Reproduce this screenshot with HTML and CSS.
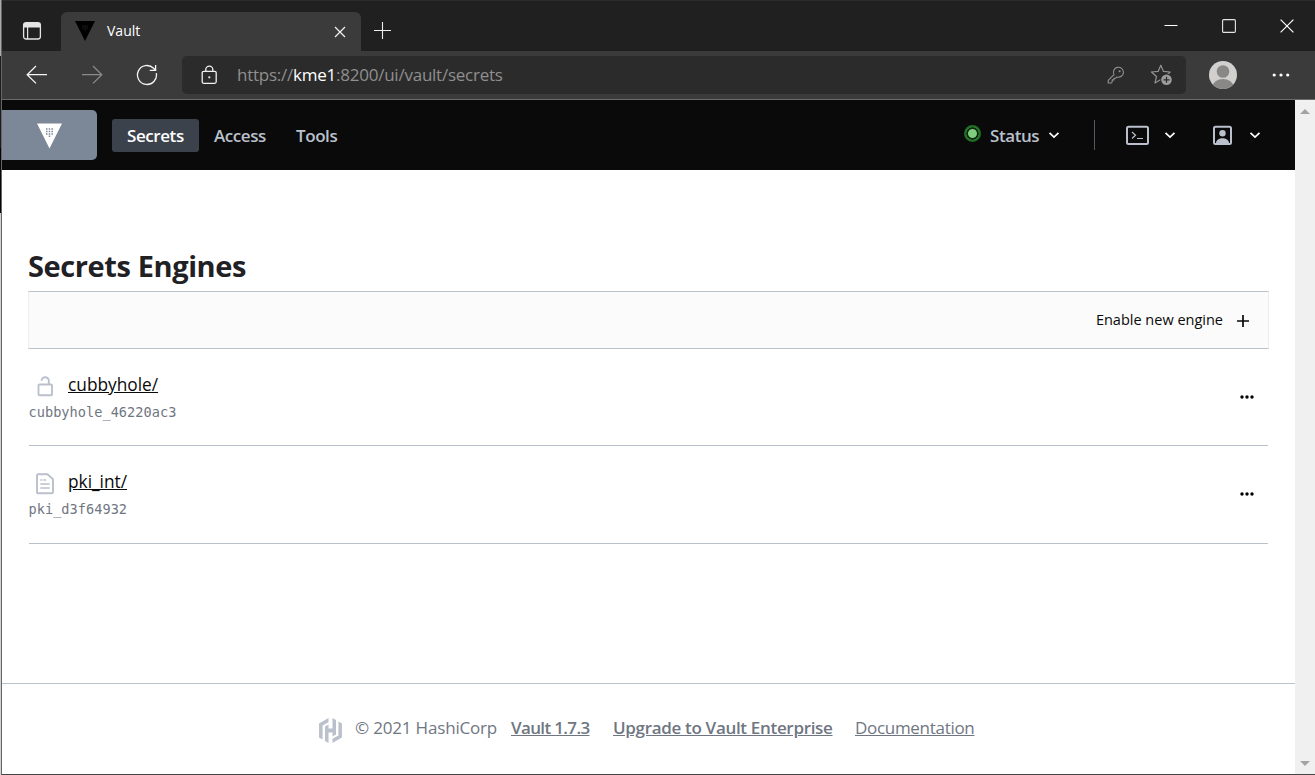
FILE: index.html
```html
<!DOCTYPE html>
<html lang="en">
<head>
  <meta charset="UTF-8" />
  <meta name="viewport" content="width=device-width, initial-scale=1.0" />
  <title>Vault</title>
  <link rel="stylesheet" href="styles.css">
</head>
<body>
  <div class="edge"></div>
  <div class="window">
    <div class="tabbar">
      <svg class="tab-menu" width="20" height="20" viewBox="0 0 20 20"><rect x="1.6" y="1.6" width="16.8" height="16.4" rx="2.5" fill="none" stroke="#e4e4e4" stroke-width="1.3"/><path d="M2 2h16v4.5H2z" fill="#e4e4e4"/><path d="M5.6 6v12" stroke="#e4e4e4" stroke-width="1.2"/></svg>
      <div class="tab">
        <svg class="favicon" width="20" height="20" viewBox="0 0 20 20"><path d="M0 0h20L10 20z" fill="#000"/><path d="M7.5 4.5h1.2v1.2H7.5zM9.5 4.5h1.2v1.2H9.5zM11.5 4.5h1.2v1.2h-1.2zM7.5 6.5h1.2v1.2H7.5zM9.5 6.5h1.2v1.2H9.5zM11.5 6.5h1.2v1.2h-1.2zM9.5 8.5h1.2v1.2H9.5z" fill="#222"/></svg>
        <span class="tab-title">Vault</span>
        <svg class="tab-close" width="12" height="12" viewBox="0 0 12 12"><path d="M1 1l10 10M11 1L1 11" stroke="#eee" stroke-width="1.3"/></svg>
      </div>
      <svg class="tab-new" width="18" height="18" viewBox="0 0 18 18"><path d="M8.5 0v17M0 8.5h17" stroke="#eee" stroke-width="1.1"/></svg>
      <div class="controls">
        <svg width="14" height="14" viewBox="0 0 14 14"><path d="M.5 6.5h13" stroke="#fff"/></svg>
        <svg width="14" height="14" viewBox="0 0 14 14"><rect x=".6" y=".6" width="12.8" height="12.8" rx="1.2" fill="none" stroke="#e8e4e0" stroke-width="1.1"/></svg>
        <svg width="14" height="14" viewBox="0 0 14 14"><path d="M.6.6l12.8 12.8M13.4.6L.6 13.4" stroke="#fff" stroke-width="1.2"/></svg>
      </div>
    </div>
    <div class="toolbar">
      <svg class="back" width="22" height="20" viewBox="0 0 22 20"><path d="M21 9.7H1.2M10 1L1.2 9.7 10 18.4" fill="none" stroke="#f4f4f4" stroke-width="1.3"/></svg>
      <svg class="forward" width="22" height="20" viewBox="0 0 22 20"><path d="M1 9.7h19.8M12 1l8.8 8.7-8.8 8.7" fill="none" stroke="#8a8a8a" stroke-width="1.3"/></svg>
      <svg class="reload" width="22" height="22" viewBox="0 0 22 22"><path d="M20.3 9.2A9.5 9.5 0 1 1 17.6 4.2L19 5.8M19.6 1v5.4h-5.8" fill="none" stroke="#f4f4f4" stroke-width="1.3"/></svg>
      <div class="address">
        <svg class="lock" width="16" height="20" viewBox="0 0 16 20"><rect x="1.2" y="6.3" width="14" height="12" rx="1.5" fill="none" stroke="#f0f0f0" stroke-width="1.3"/><path d="M4.8 6.3V4.6a3.5 3.5 0 0 1 7 0v1.7" fill="none" stroke="#f0f0f0" stroke-width="1.3"/><circle cx="8.3" cy="12.3" r="1.1" fill="#f0f0f0"/></svg>
        <span class="url">https://<b>kme1</b>:8200/ui/vault/secrets</span>
        <svg class="key" width="18" height="18" viewBox="0 0 18 18"><path d="M7 8.6A5 5 0 1 1 9.9 11L8.6 12.2H7v1.7H5.2v2L4.3 17H1.2v-2.7z" fill="none" stroke="#929292" stroke-width="1.1" stroke-linejoin="round"/><circle cx="12.6" cy="5.2" r="1" fill="#929292"/></svg>
        <svg class="star" width="23" height="22" viewBox="0 0 23 22"><path d="M10.8 1.2l2.7 6.2 6.7.6-5.1 4.5 1.5 6.4-5.8-3.4L5 18.9l1.5-6.4L1.4 8l6.7-.6z" fill="none" stroke="#929292" stroke-width="1.2" stroke-linejoin="round"/><circle cx="16.5" cy="15.8" r="6.2" fill="#2b2b2b"/><circle cx="16.5" cy="15.8" r="5.3" fill="#9c9c9c"/><path d="M16.5 12.8v6M13.5 15.8h6" stroke="#2b2b2b" stroke-width="1.2"/></svg>
      </div>
      <svg class="avatar" width="28" height="28" viewBox="0 0 28 28"><clipPath id="face"><circle cx="14" cy="14" r="14"/></clipPath><g clip-path="url(#face)"><path d="M0 0h28v28H0z" fill="#d2d0ce"/><circle cx="14" cy="10.5" r="6.3" fill="#8a8886"/><ellipse cx="14" cy="26" rx="10.5" ry="8" fill="#8a8886"/></g></svg>
      <svg class="more" width="18" height="4" viewBox="0 0 18 4"><g fill="#fff"><circle cx="2.2" cy="2" r="1.6"/><circle cx="9" cy="2" r="1.6"/><circle cx="15.7" cy="2" r="1.6"/></g></svg>
    </div>
    <div class="viewport">
      <div class="page">
        <nav class="nav">
          <a class="brand"><svg width="26" height="26" viewBox="0 0 26 26"><path d="M0 .5h25L12.5 25.5z" fill="#fff"/><g fill="#7c8797"><path d="M9 5.3h1.5v1.5H9zM11.7 5.3h1.5v1.5h-1.5zM14.4 5.3h1.5v1.5h-1.5zM9 7.8h1.5v1.5H9zM11.7 7.8h1.5v1.5h-1.5zM14.4 7.8h1.5v1.5h-1.5zM9 10.3h1.5v1.5H9zM11.7 10.3h1.5v1.5h-1.5zM14.4 10.3h1.5v1.5h-1.5zM11.7 12.6h1.5v1.5h-1.5z"/></g></svg></a>
          <a class="nav-link active">Secrets</a>
          <a class="nav-link link-access">Access</a>
          <a class="nav-link link-tools">Tools</a>
          <div class="nav-right">
            <i class="status-dot"></i>
            <span class="status">Status</span>
            <svg class="c1" width="12" height="8" viewBox="0 0 12 8"><path d="M1.5 1.8L6 6l4.500-4.200" fill="none" stroke="#fff" stroke-width="1.7"/></svg>
            <i class="divider"></i>
            <svg width="23" height="20" viewBox="0 0 23 20"><rect x="1" y="1.7" width="21" height="17.3" rx="1.5" fill="none" stroke="#bac1cc" stroke-width="2"/><path d="M6 7l3.5 3.3L6 13.5M11 13.5h6" fill="none" stroke="#bac1cc" stroke-width="1.2"/></svg>
            <svg class="c2" width="12" height="8" viewBox="0 0 12 8"><path d="M1.5 1.8L6 6l4.500-4.200" fill="none" stroke="#fff" stroke-width="1.7"/></svg>
            <svg width="19" height="20" viewBox="0 0 19 20"><rect x="1" y="1.7" width="17" height="17.3" rx="1.5" fill="none" stroke="#bac1cc" stroke-width="2"/><circle cx="9.5" cy="8.2" r="3.2" fill="#bac1cc"/><path d="M3 19v-1c0-6.500 13-6.500 13 0v1z" fill="#bac1cc"/></svg>
            <svg class="c3" width="12" height="8" viewBox="0 0 12 8"><path d="M1.5 1.8L6 6l4.500-4.200" fill="none" stroke="#fff" stroke-width="1.7"/></svg>
          </div>
        </nav>
        <main class="main">
          <h1>Secrets Engines</h1>
          <div class="actions">
            <a class="enable">Enable new engine</a>
            <svg width="12" height="12" viewBox="0 0 12 12"><path d="M6 0v12M0 6h12" stroke="#0a0a0a" stroke-width="1.7"/></svg>
          </div>
          <div class="row">
            <div>
              <div class="row-title">
                <svg width="18" height="22" viewBox="0 0 18 22"><rect x="2.5" y="8.5" width="13.5" height="10.7" rx="1" fill="none" stroke="#bac1cc" stroke-width="1.9"/><path d="M12.8 8.5V4.8a3.6 3.6 0 0 0-7.2 0" fill="none" stroke="#bac1cc" stroke-width="1.9"/></svg>
                <a>cubbyhole/</a>
              </div>
              <code>cubbyhole_46220ac3</code>
            </div>
            <svg class="dots" width="14" height="4" viewBox="0 0 14 4"><circle cx="2" cy="2" r="1.7"/><circle cx="7" cy="2" r="1.7"/><circle cx="12" cy="2" r="1.7"/></svg>
          </div>
          <div class="row row-last">
            <div>
              <div class="row-title">
                <svg width="18" height="22" viewBox="0 0 18 22"><path d="M2 1.3h9.5L17 6.2v13.1q0 1-1 1H2q-1 0-1-1V2.3q0-1 1-1z" fill="none" stroke="#bac1cc" stroke-width="1.9"/><path d="M4.3 7h2M7.3 7h2.7M4.3 11h9.4M4.3 15h9.4" stroke="#bac1cc" stroke-width="1.6"/></svg>
                <a>pki_int/</a>
              </div>
              <code>pki_d3f64932</code>
            </div>
            <svg class="dots" width="14" height="4" viewBox="0 0 14 4"><circle cx="2" cy="2" r="1.7"/><circle cx="7" cy="2" r="1.7"/><circle cx="12" cy="2" r="1.7"/></svg>
          </div>
        </main>
        <footer class="footer">
          <svg width="23" height="25" viewBox="1 0 22 24"><g fill="#bac1cc"><path d="M10.1 0L1 5.300v13.400l3.400 2V7.300l5.700-3.300z"/><path d="M13.900 0v10.100h-3.800V6.200L6.700 8.200V22l3.400 2V13.900h3.800v3.900l3.400-2V2z"/><path d="M13.900 24l9.100-5.300V5.300l-3.400-2v13.400l-5.700 3.300z"/></g></svg>
          <span class="copy">© 2021 HashiCorp</span>
          <a class="version">Vault 1.7.3</a>
          <a class="upgrade">Upgrade to Vault Enterprise</a>
          <a class="docs">Documentation</a>
        </footer>
      </div>
      <div class="scrollbar">
        <svg width="10" height="5" viewBox="0 0 10 5"><path d="M0 5l5-5 5 5z" fill="#a3a3a3"/></svg>
        <svg width="10" height="5" viewBox="0 0 10 5"><path d="M0 0l5 5 5-5z" fill="#a3a3a3"/></svg>
      </div>
    </div>
  </div>
</body>
</html>
```

FILE: styles.css
```css
* {
  box-sizing: border-box;
}
body {
  margin: 0;
  height: 775px;
  display: flex;
  overflow: hidden;
  font-family: "Open Sans", "Noto Sans", sans-serif;
  background-color: #fff;
}
svg {
  display: block;
  flex: none;
}
span, a {
  white-space: nowrap;
}
.edge {
  width: 2px;
  border-right: 1px solid #666;
  background: linear-gradient(#aaa 56px, #1c1c1c 56px, #1c1c1c 148px, #050505 148px, #050505 213px, #d0d0d0 213px);
}
.window {
  width: 1313px;
  display: flex;
  flex-direction: column;
  border-bottom: 1px solid #444;
}

/* browser chrome */
.tabbar {
  height: 51px;
  display: flex;
  background-color: #202020;
  border-top: 1px solid #2c2c2c;
}
.tab-menu {
  margin: 20px 0 0 20px;
}
.tab {
  width: 300px;
  height: 40px;
  margin: 11px 0 0 19px;
  padding: 0 15px 0 14px;
  display: flex;
  background-color: #3b3b3b;
  border-radius: 6px 6px 0 0;
}
.favicon {
  margin-top: 9px;
}
.tab-title {
  margin: 9px auto 0 12px;
  font-size: 14px;
  line-height: 20px;
  color: #fff;
}
.tab-close {
  margin-top: 14px;
}
.tab-new {
  margin: 21px 0 0 13px;
}
.controls {
  display: flex;
  gap: 44px;
  margin: 18px 21px 0 auto;
}
.toolbar {
  height: 49px;
  display: flex;
  align-items: center;
  background-color: #3b3b3b;
  border-bottom: 1px solid #6b6b6b;
}
.back {
  margin-left: 24px;
}
.forward {
  margin-left: 33px;
}
.reload {
  margin-left: 33px;
}
.address {
  width: 1004px;
  height: 38px;
  margin-left: 24px;
  padding: 0 13px 0 19px;
  display: flex;
  align-items: center;
  background-color: #2b2b2b;
  border-radius: 5px;
}
.url {
  margin: 0 auto 2px 20px;
  font-size: 17px;
  letter-spacing: -0.24px;
  color: #8f8f8f;
}
.url b {
  font-weight: 400;
  color: #fff;
}
.star {
  margin-left: 25px;
}
.avatar {
  margin-left: 23px;
}
.more {
  margin-left: 35px;
}

/* page */
.viewport {
  flex: 1;
  display: flex;
}
.page {
  width: 1293px;
  display: flex;
  flex-direction: column;
}
.nav {
  height: 70px;
  display: flex;
  align-items: center;
  background-color: #0a0a0a;
  font-size: 17px;
  font-weight: 600;
  letter-spacing: -0.42px;
  color: #bac1cc;
}
.brand {
  width: 95px;
  height: 50px;
  margin-right: 15px;
  display: flex;
  align-items: center;
  justify-content: center;
  background-color: #7c8797;
  border-radius: 0 5px 5px 0;
}
.brand svg {
  margin-top: 2px;
}
.nav-link {
  height: 33px;
  line-height: 33px;
  padding-left: 15px;
}
.active {
  width: 87px;
  background-color: #3b424c;
  border-radius: 3px;
  color: #fff;
}
.link-access {
  width: 82px;
}
.nav-right {
  display: flex;
  align-items: center;
  margin-left: auto;
}
.status-dot {
  width: 17px;
  height: 17px;
  margin: 0 9px 4px 0;
  border: 2px solid #1e6f22;
  border-radius: 50%;
  background-color: #7fce80;
  box-shadow: inset 0 0 0 2px #0d280e;
}
.status {
  width: 49px;
}
.c1 {
  margin-left: 9px;
}
.divider {
  width: 1px;
  height: 30px;
  margin: 0 31px 0 34px;
  background-color: #525761;
}
.c2 {
  margin: 0 37px 0 15px;
}
.c3 {
  margin: 0 34px 0 17px;
}
.main {
  flex: 1;
  padding: 76px 26px 0;
}
h1 {
  margin: 0;
  height: 45px;
  font-size: 29px;
  line-height: 40px;
  font-weight: 700;
  letter-spacing: -0.4px;
  color: #1f2124;
}
.actions {
  height: 58px;
  padding-right: 19px;
  display: flex;
  align-items: center;
  justify-content: flex-end;
  gap: 14px;
  background-color: #fbfbfb;
  border: 1px solid #ebeef2;
  border-top-color: #bac1cc;
  border-bottom-color: #bac1cc;
  font-size: 14.5px;
  font-weight: 500;
  color: #0a0a0a;
}
.enable {
  margin-bottom: 2px;
}
.actions svg {
  margin-top: 2px;
}
.row {
  height: 97px;
  padding: 25px 14px 0 0;
  margin: 0 1px;
  display: flex;
  justify-content: space-between;
  border-bottom: 1px solid #bac1cc;
}
.row-last {
  height: 98px;
}
.row-title {
  display: flex;
  height: 25px;
  padding-left: 7px;
}
.row-title svg {
  margin-top: 2px;
}
.row-title a {
  margin-left: 14px;
  font-size: 17.3px;
  font-weight: 500;
  line-height: 22px;
  color: #0a0a0a;
  text-decoration: underline;
}
code {
  display: block;
  margin-left: -0.5px;
  font-family: "DejaVu Sans Mono", monospace;
  font-size: 13.6px;
  letter-spacing: 0.03px;
  line-height: 26px;
  color: #6f7682;
}
.dots {
  margin-top: 21px;
}
.footer {
  height: 91px;
  padding-left: 317px;
  display: flex;
  align-items: center;
  border-top: 1px solid #bac1cc;
  font-size: 17px;
  color: #6f7682;
}
.footer svg {
  margin-top: 3px;
}
.footer span, .footer a {
  margin-bottom: 4px;
}
.footer a {
  text-decoration: underline;
}
.copy {
  width: 142px;
  margin-left: 13px;
  letter-spacing: -0.18px;
}
.version {
  width: 79px;
  margin-left: 14px;
  font-weight: 600;
  letter-spacing: -0.65px;
}
.upgrade {
  width: 220px;
  margin-left: 23px;
  font-weight: 600;
  letter-spacing: -0.32px;
}
.docs {
  margin-left: 22px;
  letter-spacing: -0.3px;
}
.scrollbar {
  width: 20px;
  padding: 9px 5px 8px;
  display: flex;
  flex-direction: column;
  justify-content: space-between;
  background-color: #f0f0f0;
}
```
